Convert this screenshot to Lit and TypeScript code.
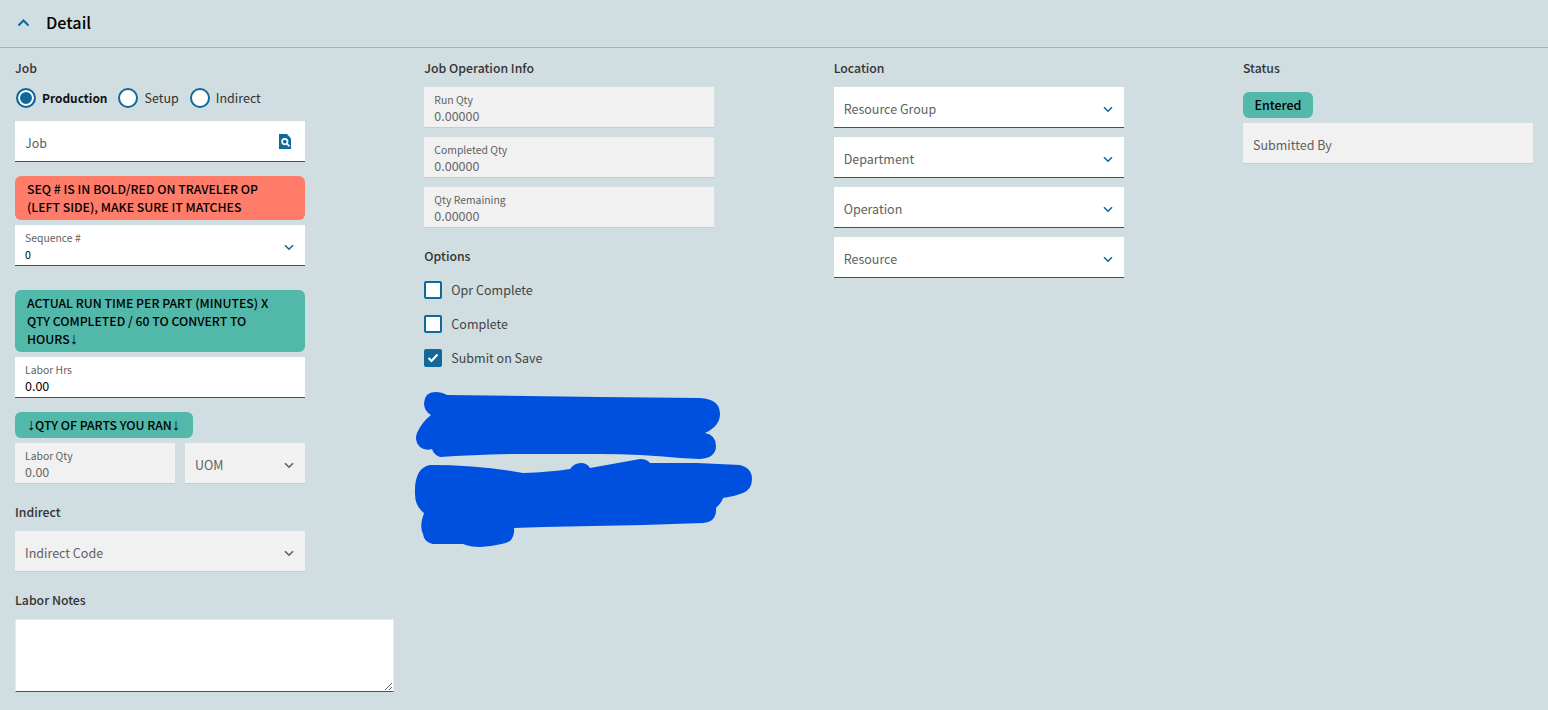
import { LitElement, html, css, svg } from "lit";
import { customElement } from "lit/decorators.js";

const chev = (grey = false) => html`<svg class="chev ${grey ? "grey" : ""}" width="10" height="7" viewBox="0 0 10 7"><path d="M1 1.2 5 5.2l4-4" fill="none" stroke-width="1.6"/></svg>`;

@customElement("app-root")
export class AppRoot extends LitElement {
  static styles = css`
    :host { display: block; width: 1548px; height: 710px; overflow: hidden; background: #d0dde1; color: #333;
      font-family: "Noto Sans CJK SC", "Source Sans Pro", "Noto Sans", sans-serif; font-size: 12.5px; line-height: 20px; }
    * { box-sizing: border-box; }
    .head { height: 48px; border-bottom: 1px solid #98b6c4; display: flex; align-items: center; padding: 0 17px 2px; gap: 16px; }
    .head span { font-size: 16.2px; font-weight: 500; color: #000; line-height: 24px; margin-bottom: 2px; }
    .grid { display: grid; grid-template-columns: 409.33px 409.33px 409.33px 290px; padding: 10px 15px 0; }
    .col { display: flex; flex-direction: column; align-items: flex-start; }
    .title { font-weight: 500; font-size: 12.27px; color: #333; height: 20px; }
    .f { width: 290px; height: 41px; background: #fff; border-bottom: 1px solid #10608a; padding: 4px 10px 0; display: flex; align-items: center; justify-content: space-between; color: #5f5f5f; }
    .f.ro { background: #f1f1f1; border-bottom-color: #c9cccd; }
    .stack { display: flex; flex-direction: column; justify-content: center; margin-bottom: 2px; }
    .stack small { font-size: 10.4px; line-height: 15px; color: #5f5f5f; }
    .stack b { font-weight: 400; font-size: 12.5px; line-height: 17px; color: #000; }
    .f.seq b { font-size: 10.7px; padding-top: 1px; margin-bottom: -1px; }
    .ro .stack b { color: #666; }
    .chev { stroke: #10699a; margin-right: 1px; }
    .chev.grey { stroke: #5f5f5f; }
    .radios { display: flex; align-items: center; margin-top: 10px; height: 20px; }
    .radio { width: 20px; height: 20px; border-radius: 50%; border: 2px solid #10699a; background: #fff; margin: 0 6px 0 1px; flex: none; }
    .radio.on { background: #10699a; box-shadow: inset 0 0 0 2px #fff; }
    .r-label { margin-right: 10px; color: #333; }
    .r-label.on { font-weight: 700; font-size: 11.9px; color: #111; margin-right: 10px; }
    .msg { border-radius: 6px; background: #52b8aa; color: #000; font-weight: 500; font-size: 12.27px; padding: 4px 12px; line-height: 18px; width: 290px; }
    .msg.red { background: #ff7c6b; }
    .msg.tight { width: 178px; white-space: nowrap; }
    .arrow { font-family: "Liberation Sans", sans-serif; font-size: 16px; line-height: 0; }
    .row { display: flex; gap: 10px; margin-top: 5px; }
    .row .f { width: 160px; }
    .row .f.uom { width: 120px; }
    textarea { display: block; width: 379px; height: 73px; margin: 9px 0 0; padding: 4px 8px; background: #fff; border: 1px solid #e6ecee; border-bottom: 1px solid #10608a; outline: none; border-radius: 0; }
    .gap9 { margin-top: 9px; }
    .list { display: flex; flex-direction: column; gap: 9px; margin-top: 9px; }
    .checks { display: flex; flex-direction: column; gap: 16px; margin-top: 15px; }
    .ck { display: flex; align-items: center; gap: 9px; height: 18px; color: #444; }
    .box { width: 18px; height: 18px; border: 2px solid #10699a; background: #fff; border-radius: 2px; display: flex; align-items: center; justify-content: center; flex: none; }
    .box.on { background: #10699a; }
    .scribble { display: block; margin: 24px 0 0 -12px; overflow: visible; }
    .badge { margin-top: 14px; background: #52b8aa; color: #000; font-weight: 500; height: 26px; width: 70px; border-radius: 6px; display: flex; align-items: center; justify-content: center; }
  `;

  private field(label: string, value = "", ro = false) {
    return html`<div class="f ${ro ? "ro" : ""}"><div class="stack"><small>${label}</small><b>${value}</b></div></div>`;
  }

  private select(label: string) {
    return html`<div class="f"><span>${label}</span>${chev()}</div>`;
  }

  private check(label: string, on = false) {
    return html`<div class="ck"><span class="box ${on ? "on" : ""}">${on ? html`<svg width="12" height="10" viewBox="0 0 12 10"><path d="M1.5 5 4.5 8 10.5 1.5" fill="none" stroke="#fff" stroke-width="2"/></svg>` : ""}</span>${label}</div>`;
  }

  render() {
    const arrow = html`<span class="arrow">↓</span>`;
    return html`
      <div class="head">
        <svg width="13" height="8" viewBox="0 0 13 8"><path d="M1.5 6.5 6.5 1.5l5 5" fill="none" stroke="#10699a" stroke-width="2"/></svg>
        <span>Detail</span>
      </div>
      <div class="grid">
        <div class="col">
          <div class="title">Job</div>
          <div class="radios">
            <span class="radio on"></span><span class="r-label on">Production</span>
            <span class="radio"></span><span class="r-label">Setup</span>
            <span class="radio"></span><span class="r-label">Indirect</span>
          </div>
          <div class="f" style="margin-top:13px">
            <span>Job</span>
            <svg width="12" height="15" viewBox="0 0 12 15" style="margin:-4px 4px 0 0"><path fill="#10699a" d="M0 0h8L12 4.5V15H0Z"/><circle cx="5.8" cy="7.6" r="2.7" fill="none" stroke="#fff" stroke-width="1.7"/><path d="M7.8 9.7 10.5 12.4" stroke="#fff" stroke-width="1.8"/></svg>
          </div>
          <div class="msg red" style="margin-top:14px">SEQ # IS IN BOLD/RED ON TRAVELER OP (LEFT SIDE), MAKE SURE IT MATCHES</div>
          <div class="f seq" style="margin-top:5px"><div class="stack"><small>Sequence #</small><b>0</b></div>${chev()}</div>
          <div class="msg" style="margin-top:24px">ACTUAL RUN TIME PER PART (MINUTES) X QTY COMPLETED / 60 TO CONVERT TO HOURS${arrow}</div>
          <div style="margin-top:5px">${this.field("Labor Hrs", "0.00")}</div>
          <div class="msg tight" style="margin-top:14px">${arrow}QTY OF PARTS YOU RAN${arrow}</div>
          <div class="row">
            ${this.field("Labor Qty", "0.00", true)}
            <div class="f ro uom"><span>UOM</span>${chev(true)}</div>
          </div>
          <div class="title" style="margin-top:18px">Indirect</div>
          <div class="f ro gap9"><span>Indirect Code</span>${chev(true)}</div>
          <div class="title" style="margin-top:18px">Labor Notes</div>
          <textarea></textarea>
        </div>
        <div class="col">
          <div class="title">Job Operation Info</div>
          <div class="list">
            ${this.field("Run Qty", "0.00000", true)}
            ${this.field("Completed Qty", "0.00000", true)}
            ${this.field("Qty Remaining", "0.00000", true)}
          </div>
          <div class="title" style="margin-top:18px">Options</div>
          <div class="checks">
            ${this.check("Opr Complete")}
            ${this.check("Complete")}
            ${this.check("Submit on Save", true)}
          </div>
          <svg class="scribble" width="340" height="156" viewBox="412 390 340 156">
            ${svg`<path fill="#0050e0" d="M435 391 Q442 391 447 394 L600 396 L700 397 Q720 398 720 413 Q720 425 705 432 Q716 434 716 445 Q716 457 700 458 L680 457 Q640 453 600 453 L510 453 Q470 454 440 456 Q434 454 432 448 Q425 450 420 446 Q414 440 417 432 Q422 421 431 414 Q424 410 424 402 Q425 391 435 391Z"/>
            <path fill="#0050e0" d="M430 464 Q480 464 523 472 Q550 471 570 468 Q574 462 581 462 Q587 462 590 467 L640 458 Q647 458 650 462 L697 462 L740 464 Q752 467 752 478 Q752 488 743 492 Q733 496 723 497 Q722 501 716 507 Q717 521 703 522 L643 524 L543 526 L514 527 Q515 535 510 540 Q503 544 480 546 Q470 546 463 543 L433 543 Q424 541 423 533 Q419 525 424 512 Q415 505 415 493 Q414 467 430 464Z"/>`}
          </svg>
        </div>
        <div class="col">
          <div class="title">Location</div>
          <div class="list">
            ${this.select("Resource Group")}
            ${this.select("Department")}
            ${this.select("Operation")}
            ${this.select("Resource")}
          </div>
        </div>
        <div class="col">
          <div class="title">Status</div>
          <div class="badge">Entered</div>
          <div class="f ro" style="margin-top:5px"><span>Submitted By</span></div>
        </div>
      </div>
    `;
  }
}
